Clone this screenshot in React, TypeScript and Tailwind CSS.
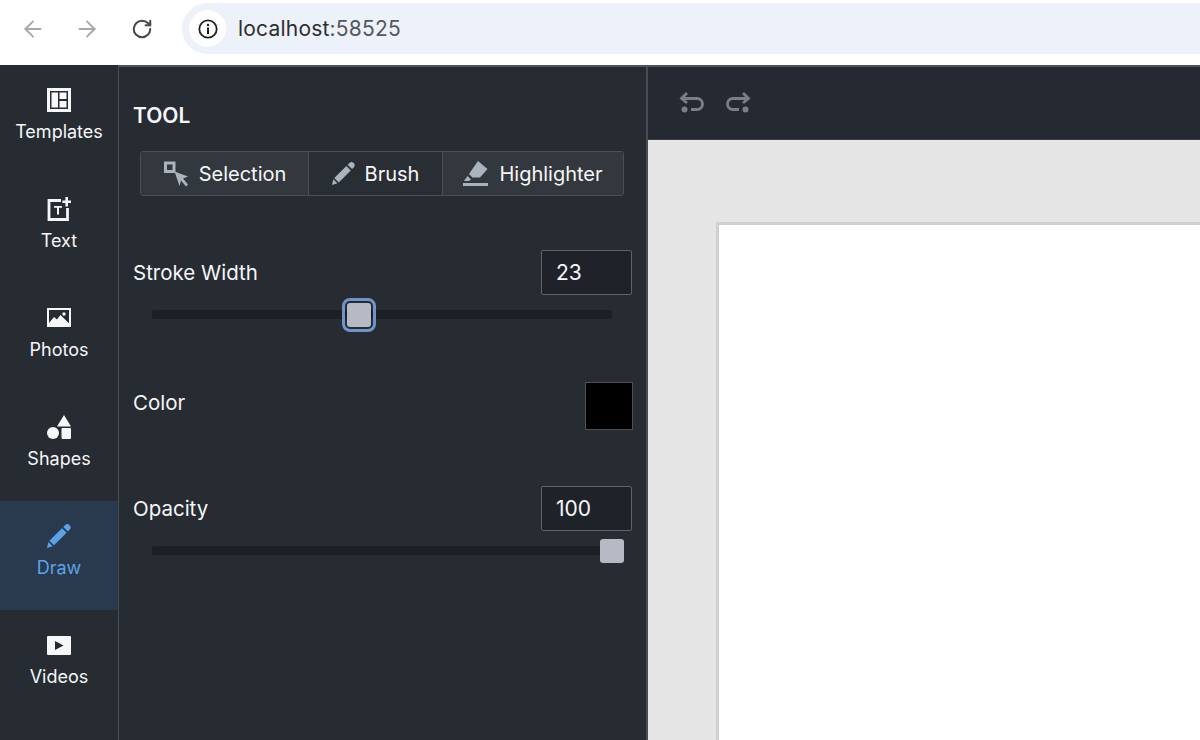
import { ArrowLeft, ArrowRight, RotateCw } from "lucide-react";
import type { ReactNode } from "react";

const font = "font-['Inter','Liberation_Sans',sans-serif]";

function TemplatesIcon() {
  return (
    <svg width="24" height="24" viewBox="0 0 24 24" fill="#f6f7f9">
      <path fillRule="evenodd" d="M0 0h24v24H0z M3 3v18h18V3z" />
      <path d="M4.500 4.500h6.500v15H4.500z M12.500 4.500h7v6.500h-7z M12.500 13h7v6.500h-7z" />
    </svg>
  );
}

function TextIcon() {
  return (
    <svg width="24" height="24" viewBox="0 0 24 24" fill="none">
      <path d="M14 3.500H2v19h18.500V11" stroke="#f6f7f9" strokeWidth="2.800" />
      <path d="M7 9h8v1.800h-3v6.700h-2v-6.700H7z" fill="#f6f7f9" />
      <path d="M18.400 0h2.600v3.400h3V6h-3v3.400h-2.600V6h-3V3.400h3z" fill="#f6f7f9" />
    </svg>
  );
}

function PhotosIcon() {
  return (
    <svg width="24" height="20" viewBox="0 0 24 20">
      <path fill="#f6f7f9" fillRule="evenodd" d="M0 0h24v19H0z M2 2v13l5-6 3 2.500 3.500-4.500 8.500 8.500V2z" />
      <circle cx="17" cy="6" r="1.700" fill="#f6f7f9" />
      <path fill="#f6f7f9" d="M2 15.500 7 10l3 2.500 3.500-5 8.500 8V17H2z" />
    </svg>
  );
}

function ShapesIcon() {
  return (
    <svg width="24" height="24" viewBox="0 0 24 24" fill="#f6f7f9">
      <path d="M17 0 24 11.500H10z" />
      <circle cx="6" cy="18" r="6" />
      <rect x="14.500" y="13" width="9.500" height="11" rx="1" />
    </svg>
  );
}

function PencilIcon({ color, size }: { color: string; size: number }) {
  return (
    <svg width={size} height={size} viewBox="0 0 24 24" fill={color}>
      <path d="M18 1.200a3.200 3.200 0 0 1 4.600 4.500l-1.700 1.700-4.600-4.500z" />
      <path d="M15 4.200 19.600 8.800 7 21.300l-4.600-4.500z" />
      <path d="M1.400 18.100 5.600 22.200 0 24z" />
    </svg>
  );
}

function VideosIcon() {
  return (
    <svg width="24" height="19" viewBox="0 0 24 19">
      <rect width="24" height="19" rx="1" fill="#f6f7f9" />
      <path d="M8 5v9l8.500-4.500z" fill="#252a31" />
    </svg>
  );
}

function SelectionIcon() {
  return (
    <svg width="26" height="26" viewBox="0 0 26 26" fill="none">
      <rect x="2.500" y="2" width="8.500" height="8.500" stroke="#abb3bf" strokeWidth="3" />
      <path d="M11.500 10.500 25 15.500l-5 2 5 6-2 2-5-6-1.500 5.500z" fill="#abb3bf" />
    </svg>
  );
}

function HighlighterIcon() {
  return (
    <svg width="26" height="26" viewBox="0 0 26 26" fill="#abb3bf">
      <path d="M15 0 24.500 8 17 16.500H9.500L6 13z" />
      <path d="M4.500 15 8 18.500 6 20H1z" />
      <rect y="22" width="25" height="3" />
    </svg>
  );
}

function UndoIcon({ flip }: { flip?: boolean }) {
  return (
    <svg
      width="26"
      height="24"
      viewBox="0 0 26 24"
      fill="none"
      stroke="#7a7f87"
      strokeWidth="2.800"
      className={flip ? "-scale-x-100" : ""}
    >
      <path d="M8 2 2.500 7.500 8 12" />
      <path d="M3 7.500h15a5.500 5.500 0 0 1 0 11h-6" />
      <circle cx="5.500" cy="18.500" r="3" fill="#7a7f87" stroke="none" />
    </svg>
  );
}

function NavItem({
  icon,
  label,
  active,
}: {
  icon: ReactNode;
  label: string;
  active?: boolean;
}) {
  return (
    <div
      className={
        "h-[109px] flex flex-col items-center text-[18px] leading-[22px] " +
        (active ? "bg-[#2a3a4e] text-[#5ba3e6]" : "text-[#f6f7f9]")
      }
    >
      <div className="h-[24px] mt-[23px] mb-[9px] flex items-center justify-center">{icon}</div>
      <span>{label}</span>
    </div>
  );
}

function ToolButton({
  icon,
  label,
  width,
  active,
  last,
}: {
  icon: ReactNode;
  label: string;
  width: string;
  active?: boolean;
  last?: boolean;
}) {
  return (
    <div
      className={
        "flex items-center justify-center gap-[10px] h-full border-[#4b5058] " +
        width +
        " " +
        (active ? "bg-[#33373e] " : "bg-[#292d34] ") +
        (last ? "" : "border-r")
      }
    >
      {icon}
      <span>{label}</span>
    </div>
  );
}

function NumberBox({ value }: { value: string }) {
  return (
    <div className="w-[91px] h-[45px] rounded-[2px] border border-[#5f646c] bg-[#1f2329] flex items-center pl-[14px] text-[21px] text-[#f6f7f9]">
      {value}
    </div>
  );
}

function Slider({ left, focused }: { left: number; focused?: boolean }) {
  return (
    <div className="relative ml-[19px] mr-[20px] h-[9px] rounded-[2px] bg-[#1c2026]">
      <div
        style={{ left }}
        className={
          "absolute top-1/2 -translate-y-1/2 -translate-x-1/2 w-[24px] h-[24px] rounded-[3px] bg-[#b5bac4] " +
          (focused ? "outline-[3px] outline-offset-[2px] outline-[#6f94cb]" : "")
        }
      />
    </div>
  );
}

export default function App() {
  return (
    <div className={"w-[1200px] h-[740px] overflow-hidden flex flex-col bg-white " + font}>
      {/* browser chrome */}
      <div className="h-[65px] shrink-0 flex items-start bg-white">
        <div className="w-[182px] h-[58px] flex items-center text-[#a6a8ab]">
          <ArrowLeft size={26} strokeWidth={1.800} className="ml-[20px]" />
          <ArrowRight size={26} strokeWidth={1.800} className="ml-[28px]" />
          <RotateCw size={22} strokeWidth={2.200} className="ml-[31px] text-[#45474a]" />
        </div>
        <div className="flex-1 h-[51px] mt-[3px] rounded-l-full bg-[#edf1f9] flex items-center pl-[7px]">
          <div className="w-[37px] h-[37px] rounded-full bg-white flex items-center justify-center">
            <svg width="20" height="20" viewBox="0 0 20 20" fill="none">
              <circle cx="10" cy="10" r="8.700" stroke="#1f1f1f" strokeWidth="1.800" />
              <circle cx="10" cy="6" r="1.200" fill="#1f1f1f" />
              <rect x="9" y="8.500" width="2" height="6.500" fill="#1f1f1f" />
            </svg>
          </div>
          <span className="ml-[12px] text-[21px] tracking-[0.2px] text-[#2c2e32]">
            localhost<span className="text-[#55585d]">:58525</span>
          </span>
        </div>
      </div>

      <div className="flex-1 flex min-h-0 border-t-2 border-[#50545b]">
        {/* left nav */}
        <div className="w-[119px] shrink-0 bg-[#272b32] border-r border-[#484c53] -mt-[2px]">
          <NavItem icon={<TemplatesIcon />} label="Templates" />
          <NavItem icon={<TextIcon />} label="Text" />
          <NavItem icon={<PhotosIcon />} label="Photos" />
          <NavItem icon={<ShapesIcon />} label="Shapes" />
          <NavItem icon={<PencilIcon color="#5ba3e6" size={24} />} label="Draw" active />
          <NavItem icon={<VideosIcon />} label="Videos" />
        </div>

        {/* tool panel */}
        <div className="w-[529px] shrink-0 bg-[#272b32] border-r-2 border-[#484c53] px-[14px] text-[#f6f7f9]">
          <div className="mt-[35px] text-[21px] leading-[28px] font-semibold">TOOL</div>
          <div className="mt-[21px] mx-[7px] w-[484px] h-[45px] flex overflow-hidden rounded-[3px] border border-[#4b5058] text-[20px] text-[#f6f7f9]">
            <ToolButton icon={<SelectionIcon />} label="Selection" width="w-[168px]" active />
            <ToolButton icon={<PencilIcon color="#abb3bf" size={23} />} label="Brush" width="w-[134px]" />
            <ToolButton icon={<HighlighterIcon />} label="Highlighter" width="flex-1" active last />
          </div>

          <div className="mt-[54px] flex items-center justify-between text-[20.500px]">
            <span className="mt-[1px]">Stroke Width</span>
            <NumberBox value="23" />
          </div>
          <div className="mt-[15px]">
            <Slider left={207} focused />
          </div>

          <div className="mt-[63px] flex items-center justify-between text-[20.500px]">
            <span className="mb-[6px]">Color</span>
            <div className="w-[48px] h-[48px] -mr-[1px] bg-black border border-[#4b5058]" />
          </div>

          <div className="mt-[56px] flex items-center justify-between text-[20.500px]">
            <span className="mt-[1px]">Opacity</span>
            <NumberBox value="100" />
          </div>
          <div className="mt-[15px]">
            <Slider left={460} />
          </div>
        </div>

        {/* canvas */}
        <div className="flex-1 min-w-0 flex flex-col bg-[#e5e5e5]">
          <div className="h-[73px] shrink-0 bg-[#252a32] border-b border-[#3a3e45] flex items-center gap-[20px] pl-[31px]">
            <UndoIcon />
            <UndoIcon flip />
          </div>
          <div className="flex-1 pl-[68px] pt-[82px]">
            <div className="h-full bg-white border-l-[3px] border-t-[3px] border-[#d0d0d0]" />
          </div>
        </div>
      </div>
    </div>
  );
}
